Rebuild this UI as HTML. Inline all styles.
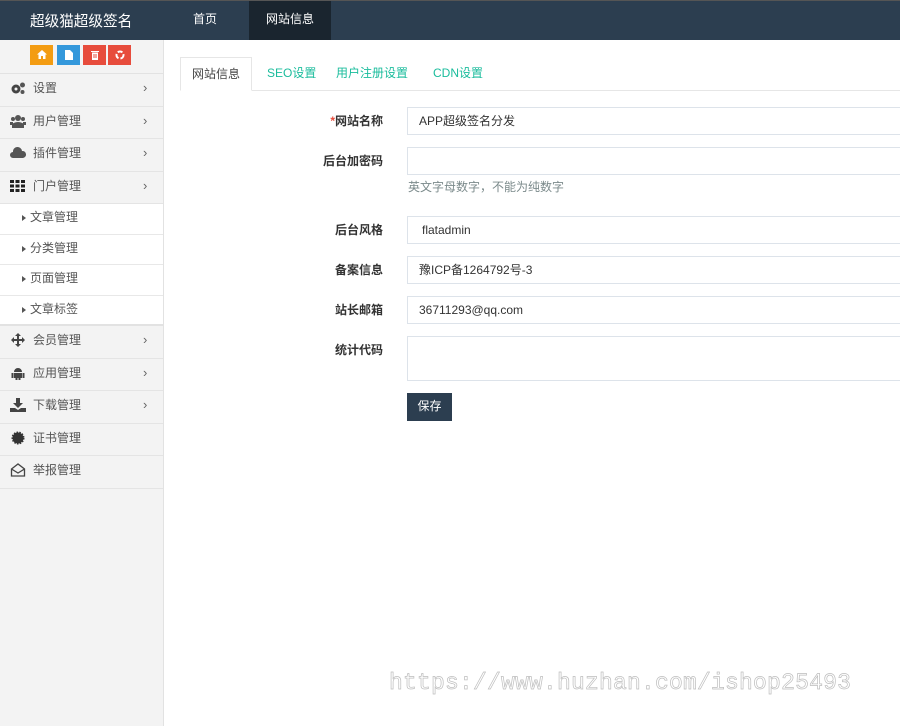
<!DOCTYPE html>
<html><head><meta charset="utf-8"><style>
*{box-sizing:border-box;margin:0;padding:0}
body{width:900px;height:726px;overflow:hidden;background:#fff;font-family:"Liberation Sans","Noto Sans CJK SC",sans-serif;font-size:12px;color:#333;position:relative}
.hdr{position:absolute;left:0;top:0;width:900px;height:40px;background:#2c3e50;border-top:1px solid #555}
.logo{position:absolute;left:30px;top:9px;color:#fff;font-size:14.6px}
.nav{position:absolute;top:0;height:39px;line-height:37px;color:#fff;font-size:12px;text-align:center}
.side{position:absolute;left:0;top:40px;width:164px;height:686px;background:#f3f3f3;border-right:1px solid #e2e2e2}
.btns{height:34px;border-bottom:1px solid #e2e2e2;position:relative}
.b{position:absolute;top:5px;width:23px;height:20px;color:#fff;font-size:10px;text-align:center;line-height:20px}
.it{height:32.5px;border-bottom:1px solid #e4e4e4;position:relative;color:#555;line-height:28px}
.it .t{position:absolute;left:33px}
.it .ar{position:absolute;left:143px;top:0;color:#666;font-size:13px}
.it .ic{position:absolute;left:10px;top:7px;width:16px;height:14px}
.sub{height:30.5px;background:#fff;border-bottom:1px solid #e8e8e8;position:relative;line-height:27px;color:#555}
.sub .t{position:absolute;left:30px}
.sub .tri{position:absolute;left:22px;top:11px;border-left:4px solid #555;border-top:3px solid transparent;border-bottom:3px solid transparent}
.tabs{position:absolute;left:180px;top:57px;width:720px;height:34px;border-bottom:1px solid #e6e6e6}
.tab{position:absolute;top:0;height:34px;line-height:32px;color:#1abc9c}
.tab.a{left:0;width:72px;background:#fff;border:1px solid #e6e6e6;border-bottom:1px solid #fff;color:#444;text-align:center}
.lbl{position:absolute;right:517px;font-weight:bold;color:#333}
.inp{position:absolute;left:407px;width:500px;height:28px;border:1px solid #dde3ea;line-height:26px;padding-left:11px;color:#333}
.help{position:absolute;left:408px;top:178px;color:#7b8a8b}
.save{position:absolute;left:407px;top:393px;width:45px;height:28px;background:#2c3e50;color:#fff;line-height:27px;text-align:center}
.wm{position:absolute;left:389px;top:670px;font-family:"Liberation Mono",monospace;font-size:23px;color:transparent;-webkit-text-stroke:0.7px #bdbdbd;letter-spacing:0.2px}
</style></head><body>
<div class="hdr">
<div class="logo">超级猫超级签名</div>
<div class="nav" style="left:178px;width:54px">首页</div>
<div class="nav" style="left:249px;width:82px;background:#1a252f">网站信息</div>
</div>
<div class="side">
<div class="btns">
<div class="b" style="left:30px;background:#f39c12">
<svg width="10" height="9" viewBox="0 0 10 9" style="margin-top:5px"><path d="M5 0L0 4.5h1.5V9h2.5V6h2v3h2.5V4.5H10z" fill="#fff"/></svg></div>
<div class="b" style="left:57px;background:#3498db">
<svg width="8" height="10" viewBox="0 0 8 10" style="margin-top:5px"><path d="M0 0h5l3 3v7H0z" fill="#fff"/></svg></div>
<div class="b" style="left:83px;background:#e74c3c">
<svg width="8" height="10" viewBox="0 0 8 10" style="margin-top:5px"><path d="M0 1h8v1H0zM1 2.5h6V10H1z" fill="#fff"/><path d="M3 4v4M5 4v4" stroke="#e74c3c"/></svg></div>
<div class="b" style="left:108px;background:#e74c3c">
<svg width="10" height="10" viewBox="0 0 10 10" style="margin-top:5px"><circle cx="5" cy="5" r="3.5" stroke="#fff" stroke-width="2" fill="none" stroke-dasharray="5 2"/></svg></div>
</div>
<div class="it"><svg class="ic" viewBox="0 0 16 14"><circle cx="6" cy="8" r="4.5" fill="#444"/><circle cx="6" cy="8" r="1.5" fill="#f3f3f3"/><circle cx="12.5" cy="4" r="2.5" fill="#555"/><circle cx="12.5" cy="11" r="2" fill="#555"/></svg><span class="t">设置</span><span class="ar">›</span></div>
<div class="it"><svg class="ic" viewBox="0 0 16 14"><circle cx="8" cy="4" r="3" fill="#555"/><circle cx="3" cy="5" r="2" fill="#555"/><circle cx="13" cy="5" r="2" fill="#555"/><path d="M2 14v-4q6-4 12 0v4z" fill="#555"/><path d="M0 11v-3h3v3zM13 11v-3h3v3z" fill="#555"/></svg><span class="t">用户管理</span><span class="ar">›</span></div>
<div class="it"><svg class="ic" viewBox="0 0 16 14"><path d="M3 12a3 3 0 0 1 0-6a4.5 4.5 0 0 1 9-1a3.5 3.5 0 0 1 1 7z" fill="#555"/></svg><span class="t">插件管理</span><span class="ar">›</span></div>
<div class="it"><svg class="ic" viewBox="0 0 16 14"><g fill="#222"><rect x="0" y="1" width="4" height="3"/><rect x="5.5" y="1" width="4" height="3"/><rect x="11" y="1" width="4" height="3"/><rect x="0" y="5.5" width="4" height="3"/><rect x="5.5" y="5.5" width="4" height="3"/><rect x="11" y="5.5" width="4" height="3"/><rect x="0" y="10" width="4" height="3"/><rect x="5.5" y="10" width="4" height="3"/><rect x="11" y="10" width="4" height="3"/></g></svg><span class="t">门户管理</span><span class="ar">›</span></div>
<div class="sub"><span class="tri"></span><span class="t">文章管理</span></div>
<div class="sub"><span class="tri"></span><span class="t">分类管理</span></div>
<div class="sub"><span class="tri"></span><span class="t">页面管理</span></div>
<div class="sub" style="border-bottom:2px solid #e2e2e2"><span class="tri"></span><span class="t">文章标签</span></div>
<div class="it"><svg class="ic" viewBox="0 0 16 14"><path d="M8 0l3 3H9v3h3V4l3 3-3 3V8H9v3h2l-3 3-3-3h2V8H4v2L1 7l3-3v2h3V3H5z" fill="#444"/></svg><span class="t">会员管理</span><span class="ar">›</span></div>
<div class="it"><svg class="ic" viewBox="0 0 16 14"><path d="M4 6a4 4 0 0 1 8 0zM4 7h8v5H4zM1.5 7h2v5h-2zM12.5 7h2v5h-2zM5.5 12h2v2h-2zM8.5 12h2v2h-2z" fill="#444"/></svg><span class="t">应用管理</span><span class="ar">›</span></div>
<div class="it"><svg class="ic" viewBox="0 0 16 14"><path d="M6 0h4v5h3l-5 5-5-5h3zM0 10h5l3 2 3-2h5v4H0z" fill="#444"/></svg><span class="t">下载管理</span><span class="ar">›</span></div>
<div class="it"><svg class="ic" viewBox="0 0 16 14"><circle cx="8" cy="7" r="5.5" fill="#333" stroke="#333" stroke-width="2" stroke-dasharray="1.5 1.2"/></svg><span class="t">证书管理</span></div>
<div class="it"><svg class="ic" viewBox="0 0 16 14"><path d="M1.5 6L8 1l6.5 5v7h-13zM1.5 6l6.5 4 6.5-4" fill="none" stroke="#444" stroke-width="1.3"/></svg><span class="t">举报管理</span></div>
</div>
<div class="tabs">
<div class="tab a">网站信息</div>
<div class="tab" style="left:87px">SEO设置</div>
<div class="tab" style="left:156px">用户注册设置</div>
<div class="tab" style="left:253px">CDN设置</div>
</div>
<div class="lbl" style="top:112px"><span style="color:#e74c3c">*</span>网站名称</div>
<div class="inp" style="top:107px">APP超级签名分发</div>
<div class="lbl" style="top:152px">后台加密码</div>
<div class="inp" style="top:147px"></div>
<div class="help">英文字母数字，不能为纯数字</div>
<div class="lbl" style="top:221px">后台风格</div>
<div class="inp" style="top:216px;padding-left:14px">flatadmin</div>
<div class="lbl" style="top:261px">备案信息</div>
<div class="inp" style="top:256px">豫ICP备1264792号-3</div>
<div class="lbl" style="top:301px">站长邮箱</div>
<div class="inp" style="top:296px">36711293@qq.com</div>
<div class="lbl" style="top:341px">统计代码</div>
<div class="inp" style="top:336px;height:45px"></div>
<div class="save">保存</div>
<div class="wm">https://www.huzhan.com/ishop25493</div>
</body></html>
